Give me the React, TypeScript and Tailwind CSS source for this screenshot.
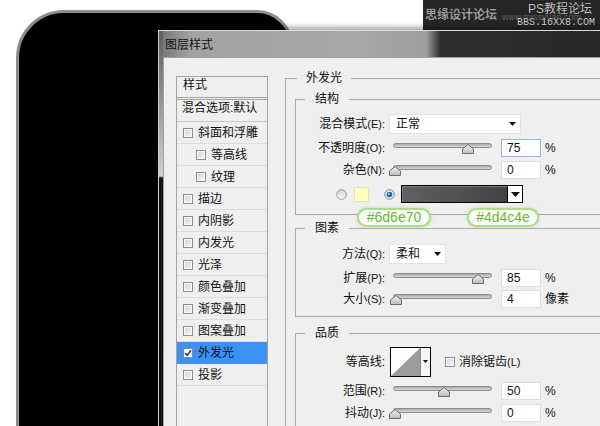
import React from 'react';

const layers = [
  { label: '斜面和浮雕' },
  { label: '等高线', indent: true },
  { label: '纹理', indent: true },
  { label: '描边' },
  { label: '内阴影' },
  { label: '内发光' },
  { label: '光泽' },
  { label: '颜色叠加' },
  { label: '渐变叠加' },
  { label: '图案叠加' },
  { label: '外发光', checked: true, active: true },
  { label: '投影' },
];

function Box({ checked }: { checked?: boolean }) {
  return (
    <span
      className={
        checked
          ? 'flex h-[10px] w-[10px] shrink-0 items-center justify-center border border-[#8a8a8a] bg-white'
          : 'flex h-[10px] w-[10px] shrink-0 border border-[#8e8e8e] bg-[linear-gradient(135deg,#d4d4d4,#f6f6f6)] shadow-[inset_0_0_0_1px_#fafafa]'
      }
    >
      {checked && (
        <svg width="8" height="8" viewBox="0 0 8 8">
          <path d="M1 4 L3.2 6.3 L7 1.2" fill="none" stroke="#1d3b78" strokeWidth="1.6" />
        </svg>
      )}
    </span>
  );
}

function Arrow({ w = 7, h = 4 }: { w?: number; h?: number }) {
  return (
    <svg width={w} height={h} viewBox={`0 0 ${w} ${h}`}>
      <polygon points={`0,0 ${w},0 ${w / 2},${h}`} fill="#111" />
    </svg>
  );
}

function Slider({ value }: { value: number }) {
  const left = 1 + value * 98 - 5.5;
  return (
    <div className="relative ml-[8px] h-[11px] w-[99px] shrink-0">
      <div className="h-[5px] w-full rounded-full border border-[#8c8c8c] bg-[linear-gradient(180deg,#a9a9a9,#d9d9d9)]" />
      <svg className="absolute top-[1px]" style={{ left }} width="12" height="10" viewBox="0 0 12 10">
        <defs>
          <linearGradient id="th" x1="0" y1="0" x2="0" y2="1">
            <stop offset="0" stopColor="#f2f2f2" />
            <stop offset="1" stopColor="#bdbdbd" />
          </linearGradient>
        </defs>
        <polygon points="6,0.5 11.5,5 11.5,9.5 0.5,9.5 0.5,5" fill="url(#th)" stroke="#6b6b6b" />
      </svg>
    </div>
  );
}

function Field({ value, focus }: { value: string; focus?: boolean }) {
  return (
    <div
      className={
        focus
          ? 'ml-[9px] flex h-[18px] w-[40px] shrink-0 items-center border border-[#8db8e6] bg-white pl-[5px] text-[12px]'
          : 'ml-[9px] flex h-[18px] w-[40px] shrink-0 items-center border border-[#dedede] bg-white pl-[5px] text-[12px]'
      }
    >
      {value}
    </div>
  );
}

// Chinese label with the shortcut key in the smaller latin face
function Label({ text, hint }: { text: string; hint?: string }) {
  return (
    <span className="w-[89px] shrink-0 text-right text-[12px] leading-[14px]">
      {text}
      {hint && <span className="text-[11px]">{hint}</span>}
    </span>
  );
}

function SliderRow({
  label,
  hint,
  pos,
  value,
  unit = '%',
  focus,
  className,
}: {
  label: string;
  hint: string;
  pos: number;
  value: string;
  unit?: string;
  focus?: boolean;
  className: string;
}) {
  return (
    <div className={className}>
      <Label text={label} hint={hint} />
      <Slider value={pos} />
      <Field value={value} focus={focus} />
      <span className="ml-[4px] text-[12px]">{unit}</span>
    </div>
  );
}

function Group({ title, className, children }: { title: string; className: string; children: React.ReactNode }) {
  return (
    <fieldset className={className}>
      <legend className="ml-[9px] px-[10px] text-[12px] leading-[14px]">{title}</legend>
      {children}
    </fieldset>
  );
}

export default function App() {
  return (
    <div className="relative h-[426px] w-[600px] overflow-hidden bg-white font-['Liberation_Sans','Noto_Sans_CJK_SC',sans-serif] text-[#111]">
      {/* screen behind the dialog */}
      <div className="absolute left-[16px] top-[10px] h-[480px] w-[277px] rounded-[48px] rounded-tr-[36px] border-[3px] border-[#8d8d8d] bg-black" />

      {/* watermark */}
      <div className="absolute right-0 top-0 h-[30px] w-[177px] overflow-hidden bg-[#262626]">
        <span className="absolute left-[2px] top-[8px] text-[12px] font-bold leading-[14px] text-[#9c9c9c] [text-shadow:0_0_1px_#000]">
          思缘设计论坛
        </span>
        <span className="absolute left-[79px] top-[12px] text-[9px] leading-[10px] text-[#5e5e5e]">www.missyuan.com</span>
        <span className="absolute left-[105px] top-[2px] text-[12px] leading-[14px] text-[#c4c4c4] [text-shadow:0_0_1px_#000]">
          PS教程论坛
        </span>
        <span className="absolute left-[94px] top-[17px] font-['Liberation_Mono',monospace] text-[10px] leading-[11px] text-[#d2d2d2] [text-shadow:0_0_1px_#000]">
          BBS.16XX8.COM
        </span>
      </div>

      {/* dialog */}
      <div className="absolute left-[158px] top-[30px] flex h-[400px] w-[442px] border-t border-[#dcdcdc] shadow-[0_-3px_5px_rgba(0,0,0,0.35)]">
        <div className="w-[5px] shrink-0 border-l border-[#cfcfcf] bg-[linear-gradient(180deg,#5e5e5e_0px,#8c8c8c_60px,#d0d0d0_145px,#161616_147px,#111_100%)]" />
        <div className="flex flex-1 flex-col">
          <div className="flex h-[26px] shrink-0 items-center bg-[linear-gradient(90deg,#7a7a7a_0%,#a2a2a2_6%,#a8a8a8_42%,#9e9e9e_57%,#2e2e2e_60%,#262626_100%)] pl-[2px] pt-[2px] text-[12px]">
            图层样式
          </div>
          <div className="flex flex-1 items-start overflow-hidden border-l border-t border-[#a0a0a0] bg-[#efefef] pl-[12px]">
            {/* styles list */}
            <div className="mt-[18px] h-[360px] w-[92px] shrink-0 border border-[#a3a3a3] text-[12px] leading-[14px]">
              <div className="h-[23px] border-b-[3px] border-double border-[#a3a3a3] pl-[6px] pt-[1px]">样式</div>
              <div className="h-[22px] border-b border-[#c6c6c6] pl-[5px] pt-[1px]">混合选项:默认</div>
              {layers.map((l) => (
                <div
                  key={l.label}
                  className={
                    l.active
                      ? 'flex h-[22px] items-center bg-[#3a92f5] pl-[6px]'
                      : l.indent
                        ? 'flex h-[22px] items-center border-b border-[#dcdcdc] pl-[19px]'
                        : 'flex h-[22px] items-center border-b border-[#dcdcdc] pl-[6px]'
                  }
                >
                  <Box checked={l.checked} />
                  <span className="ml-[5px]">{l.label}</span>
                </div>
              ))}
            </div>

            {/* outer glow settings */}
            <fieldset className="ml-[17px] mt-[13px] h-[400px] w-[340px] shrink-0 border border-r-0 border-[#a9a9a9]">
              <legend className="ml-[11px] px-[9px] text-[12px] leading-[14px]">外发光</legend>

              <Group title="结构" className="ml-[9px] mt-[7px] w-[330px] border border-r-0 border-[#a9a9a9] pb-[11px] pt-[8px]">
                <div className="flex h-[20px] items-center">
                  <Label text="混合模式" hint="(E):" />
                  <div className="ml-[4px] flex h-[20px] w-[132px] items-center justify-between border border-[#e2e2e2] bg-white pl-[6px] pr-[4px] text-[12px]">
                    正常
                    <Arrow />
                  </div>
                </div>
                <SliderRow className="mt-[5px] flex h-[18px] items-center" label="不透明度" hint="(O):" pos={0.75} value="75" focus />
                <SliderRow className="mt-[4px] flex h-[18px] items-center" label="杂色" hint="(N):" pos={0} value="0" />
                <div className="mt-[6px] flex h-[18px] items-center">
                  <svg className="ml-[40px]" width="11" height="11" viewBox="0 0 11 11">
                    <defs>
                      <linearGradient id="r0" x1="0" y1="0" x2="0" y2="1">
                        <stop offset="0" stopColor="#d0d0d0" />
                        <stop offset="1" stopColor="#f8f8f8" />
                      </linearGradient>
                    </defs>
                    <circle cx="5.5" cy="5.5" r="4.8" fill="url(#r0)" stroke="#9c9c9c" />
                  </svg>
                  <span className="ml-[7px] h-[15px] w-[15px] border border-[#e3e3b0] bg-[#ffffc0]" />
                  <svg className="ml-[15px]" width="11" height="11" viewBox="0 0 11 11">
                    <circle cx="5.5" cy="5.5" r="4.8" fill="#e9e9e9" stroke="#8a8a8a" />
                    <circle cx="5.5" cy="5.5" r="2.8" fill="#1f6cb5" />
                    <circle cx="4.8" cy="4.7" r="1" fill="#9ad0ff" />
                  </svg>
                  <div className="ml-[6px] flex h-[18px] border border-black">
                    <div className="w-[105px] bg-[linear-gradient(90deg,#606062,#434244)] shadow-[inset_1px_1px_0_#7a7a7c]" />
                    <div className="flex w-[15px] items-center justify-center border-l border-black bg-white">
                      <Arrow w={9} h={5} />
                    </div>
                  </div>
                </div>
              </Group>

              <Group title="图素" className="ml-[9px] mt-[6px] w-[330px] border border-r-0 border-[#a9a9a9] pb-[8px] pt-[9px]">
                <div className="flex h-[20px] items-center">
                  <Label text="方法" hint="(Q):" />
                  <div className="ml-[4px] flex h-[20px] w-[57px] items-center justify-between border border-[#e2e2e2] bg-white pl-[6px] pr-[4px] text-[12px]">
                    柔和
                    <Arrow />
                  </div>
                </div>
                <SliderRow className="mt-[5px] flex h-[18px] items-center" label="扩展" hint="(P):" pos={0.85} value="85" />
                <SliderRow className="mt-[3px] flex h-[18px] items-center" label="大小" hint="(S):" pos={0.016} value="4" unit="像素" />
              </Group>

              <Group title="品质" className="ml-[9px] mt-[9px] w-[330px] border border-r-0 border-[#a9a9a9] pb-[10px] pt-[7px]">
                <div className="flex h-[30px] items-center">
                  <Label text="等高线:" />
                  <div className="ml-[5px] flex h-[30px] w-[41px] border border-black bg-white">
                    <svg width="29" height="28" viewBox="0 0 29 28">
                      <polygon points="0,28 29,0 29,28" fill="#9c9c9c" />
                    </svg>
                    <div className="flex flex-1 justify-center border-l border-[#8a8a8a] bg-[#f6f6f6] pt-[12px]">
                      <Arrow w={5} h={3} />
                    </div>
                  </div>
                  <span className="ml-[14px]">
                    <Box />
                  </span>
                  <span className="ml-[4px] text-[12px] leading-[14px]">
                    消除锯齿<span className="text-[11px]">(L)</span>
                  </span>
                </div>
                <SliderRow className="mt-[5px] flex h-[18px] items-center" label="范围" hint="(R):" pos={0.5} value="50" />
                <SliderRow className="mt-[4px] flex h-[18px] items-center" label="抖动" hint="(J):" pos={0} value="0" />
              </Group>
            </fieldset>
          </div>
        </div>
      </div>

      {/* colour callouts */}
      <div className="absolute left-[357px] top-[208px] flex h-[19px] w-[74px] items-center justify-center rounded-full border-2 border-[#aedb8c] bg-[#fbfef6] text-[14px] text-[#69b83b] shadow-[0_0_3px_rgba(150,210,100,0.6)]">
        #6d6e70
      </div>
      <div className="absolute left-[467px] top-[208px] flex h-[19px] w-[72px] items-center justify-center rounded-full border-2 border-[#aedb8c] bg-[#fbfef6] text-[14px] text-[#69b83b] shadow-[0_0_3px_rgba(150,210,100,0.6)]">
        #4d4c4e
      </div>
    </div>
  );
}
